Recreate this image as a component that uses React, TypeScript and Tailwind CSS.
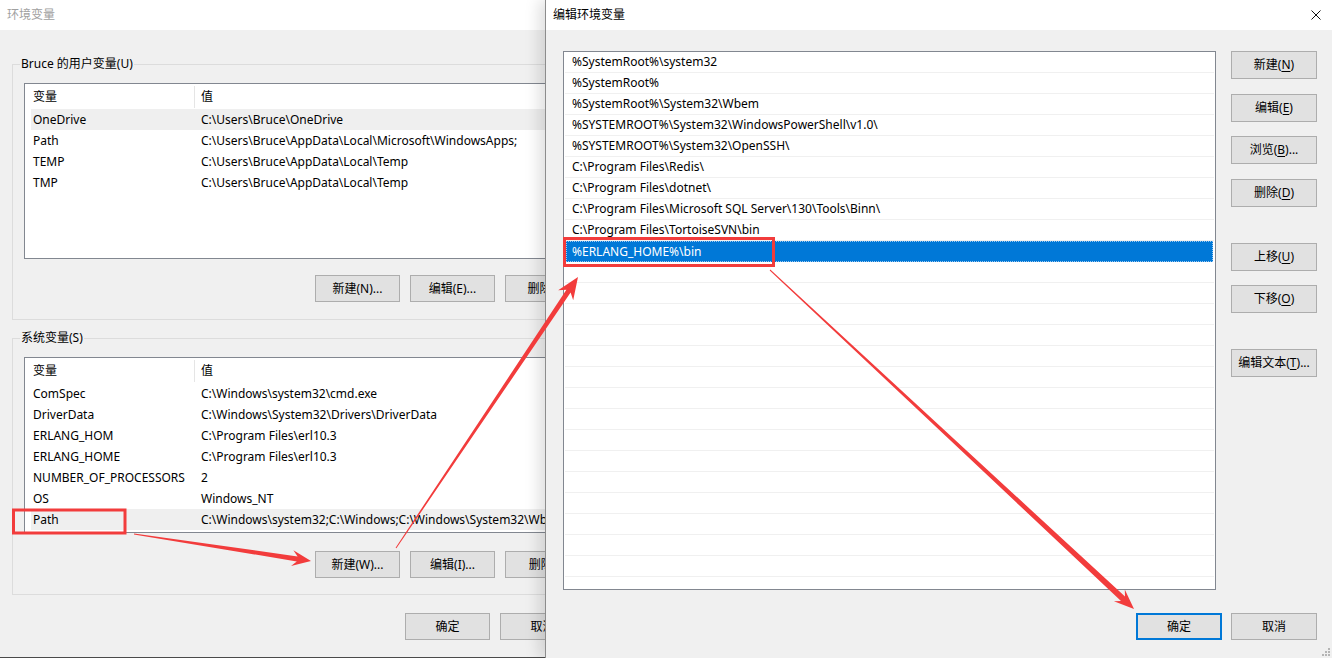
import React from 'react';

const FONT = "font-['Noto_Sans','Noto_Sans_CJK_SC',sans-serif]";

const userVars = [
  ['OneDrive', 'C:\\Users\\Bruce\\OneDrive'],
  ['Path', 'C:\\Users\\Bruce\\AppData\\Local\\Microsoft\\WindowsApps;'],
  ['TEMP', 'C:\\Users\\Bruce\\AppData\\Local\\Temp'],
  ['TMP', 'C:\\Users\\Bruce\\AppData\\Local\\Temp'],
];

const systemVars = [
  ['ComSpec', 'C:\\Windows\\system32\\cmd.exe'],
  ['DriverData', 'C:\\Windows\\System32\\Drivers\\DriverData'],
  ['ERLANG_HOM', 'C:\\Program Files\\erl10.3'],
  ['ERLANG_HOME', 'C:\\Program Files\\erl10.3'],
  ['NUMBER_OF_PROCESSORS', '2'],
  ['OS', 'Windows_NT'],
  ['Path', 'C:\\Windows\\system32;C:\\Windows;C:\\Windows\\System32\\Wbem;C:\\Windows\\System32\\WindowsPowerShell\\v1.0\\'],
];

const pathEntries = [
  '%SystemRoot%\\system32',
  '%SystemRoot%',
  '%SystemRoot%\\System32\\Wbem',
  '%SYSTEMROOT%\\System32\\WindowsPowerShell\\v1.0\\',
  '%SYSTEMROOT%\\System32\\OpenSSH\\',
  'C:\\Program Files\\Redis\\',
  'C:\\Program Files\\dotnet\\',
  'C:\\Program Files\\Microsoft SQL Server\\130\\Tools\\Binn\\',
  'C:\\Program Files\\TortoiseSVN\\bin',
  '%ERLANG_HOME%\\bin',
];

function WinButton({ children, className = '' }: { children: React.ReactNode; className?: string }) {
  return (
    <button className={`w-[85px] h-[27px] shrink-0 bg-[#e1e1e1] border border-[#adadad] text-[12px] text-black flex items-center justify-center whitespace-nowrap ${className}`}>
      {children}
    </button>
  );
}

function VarList({ rows, highlight }: { rows: string[][]; highlight: number }) {
  return (
    <div className="h-[176px] border border-[#828790] bg-white overflow-hidden">
      <div className="flex h-[25px] items-center">
        <div className="w-[170px] shrink-0 h-[22px] pl-[8px] flex items-center border-r border-[#e5e5e5]">变量</div>
        <div className="pl-[6px]">值</div>
      </div>
      {rows.map(([name, value], i) => (
        <div key={name + i} className={`ml-[6px] h-[21px] flex items-center whitespace-nowrap ${i === highlight ? 'bg-[#efefef]' : ''}`}>
          <div className="w-[164px] shrink-0 pl-[2px] overflow-hidden">{name}</div>
          <div className="pl-[6px]">{value}</div>
        </div>
      ))}
    </div>
  );
}

function EnvWindow() {
  return (
    <div className="w-[545px] h-[658px] shrink-0 overflow-hidden border-b border-[#4a4a4a]">
      <div className="w-[614px] h-full flex flex-col bg-[#f0f0f0]">
        <div className="h-[30px] bg-white pl-[7px] flex items-center text-[12px] text-[#a0a0a0]">环境变量</div>

        <fieldset className="min-w-0 mx-[12px] mt-[26px] border border-[#dcdcdc] px-[11px] pt-[11px] pb-[17px]">
          <legend className="-ml-[4px] px-[1px] leading-[16px]">Bruce 的用户变量(U)</legend>
          <VarList rows={userVars} highlight={0} />
          <div className="flex justify-end gap-[10px] mt-[16px]">
            <WinButton>新建(N)...</WinButton>
            <WinButton>编辑(E)...</WinButton>
            <WinButton>删除(D)</WinButton>
          </div>
        </fieldset>

        <fieldset className="min-w-0 mx-[12px] mt-[10px] border border-[#dcdcdc] px-[11px] pt-[11px] pb-[16px]">
          <legend className="-ml-[4px] px-[1px] leading-[16px]">系统变量(S)</legend>
          <VarList rows={systemVars} highlight={6} />
          <div className="flex justify-end gap-[10px] mt-[18px]">
            <WinButton>新建(W)...</WinButton>
            <WinButton>编辑(I)...</WinButton>
            <WinButton>删除(L)</WinButton>
          </div>
        </fieldset>

        <div className="flex justify-end gap-[10px] mt-[18px] pr-[29px]">
          <WinButton>确定</WinButton>
          <WinButton>取消</WinButton>
        </div>
      </div>
    </div>
  );
}

function SideButton({ label, mn, tail = '', className = '' }: { label: string; mn: string; tail?: string; className?: string }) {
  return (
    <button className={`w-[86px] h-[28px] shrink-0 bg-[#e1e1e1] border border-[#adadad] text-[12px] text-black flex items-center justify-center ${className}`}>
      {label}(<span className="underline underline-offset-2">{mn}</span>){tail}
    </button>
  );
}

function EditDialog() {
  const empties = Array.from({ length: 17 });
  return (
    <div className="flex-1 h-[658px] flex flex-col bg-[#f0f0f0] border-l border-[#8c8c8c] relative z-10 shadow-[-6px_0_14px_rgba(0,0,0,0.13)]">
      <div className="h-[30px] bg-white flex items-center justify-between pl-[7px] pr-[11px]">
        <span className="text-[12px] text-black">编辑环境变量</span>
        <svg width="10" height="10" viewBox="0 0 10 10" className="block">
          <path d="M0.5 0.5 L9.5 9.5 M9.5 0.5 L0.5 9.5" stroke="#111" strokeWidth="1" />
        </svg>
      </div>

      <div className="flex-1 flex flex-col pl-[17px] pr-[15px] pt-[21px]">
        <div className="flex gap-[15px]">
          <div className="w-[653px] h-[539px] border border-[#828790] bg-white overflow-hidden">
            {pathEntries.map((p, i) =>
              i === pathEntries.length - 1 ? (
                <div key={p} className="mx-[2px] h-[21px] flex items-center pl-[5px] bg-[#0078d7] text-white border border-dotted border-[#9cc8f0]">
                  {p}
                </div>
              ) : (
                <div key={p} className="mx-[1px] h-[21px] flex items-center pl-[7px] border-b border-[#f0f0f0] whitespace-nowrap">
                  {p}
                </div>
              )
            )}
            {empties.map((_, i) => (
              <div key={i} className="mx-[1px] h-[21px] border-b border-[#f0f0f0]" />
            ))}
          </div>

          <div className="w-[86px] flex flex-col">
            <SideButton label="新建" mn="N" />
            <SideButton label="编辑" mn="E" className="mt-[15px]" />
            <SideButton label="浏览" mn="B" tail="..." className="mt-[14px]" />
            <SideButton label="删除" mn="D" className="mt-[15px]" />
            <SideButton label="上移" mn="U" className="mt-[36px]" />
            <SideButton label="下移" mn="O" className="mt-[14px]" />
            <SideButton label="编辑文本" mn="T" tail="..." className="mt-[36px]" />
          </div>
        </div>

        <div className="flex justify-end gap-[9px] mt-[23px]">
          <button className="w-[86px] h-[27px] bg-[#e1e1e1] border-2 border-[#0078d7] text-[12px] text-black flex items-center justify-center">确定</button>
          <button className="w-[86px] h-[27px] bg-[#e1e1e1] border border-[#adadad] text-[12px] text-black flex items-center justify-center">取消</button>
        </div>
      </div>

      {/* size grip */}
      <svg width="10" height="10" viewBox="0 0 10 10" className="absolute right-[2px] bottom-[2px]">
        <rect x="8" y="2" width="2" height="2" fill="#b5b5b5" />
        <rect x="5" y="5" width="2" height="2" fill="#b5b5b5" />
        <rect x="8" y="5" width="2" height="2" fill="#b5b5b5" />
        <rect x="2" y="8" width="2" height="2" fill="#b5b5b5" />
        <rect x="5" y="8" width="2" height="2" fill="#b5b5b5" />
        <rect x="8" y="8" width="2" height="2" fill="#b5b5b5" />
      </svg>
    </div>
  );
}

function Annotations() {
  return (
    <svg className="absolute inset-0 pointer-events-none z-20" width="1332" height="658" viewBox="0 0 1332 658">
      <rect x="13.5" y="510" width="111.5" height="23" fill="none" stroke="#f23c3c" strokeWidth="3" />
      <rect x="564.5" y="238.5" width="209" height="27" fill="none" stroke="#f23c3c" strokeWidth="3" />
      <polygon
        fill="#f23c3c"
        points="134.1,533.5 297.6,556.4 293.4,550.2 311,561 291,566 296.8,561.4 133.9,534.5"
      />
      <polygon
        fill="#f23c3c"
        points="396.4,548.3 570.6,292.5 573.2,300.3 578,277 558.2,290.3 566.4,289.7 395.6,547.7"
      />
      <polygon
        fill="#f23c3c"
        points="769.7,270.4 1121,601 1113.9,601.2 1134,609 1124.8,589.5 1125,596.6 770.3,269.6"
      />
    </svg>
  );
}

export default function App() {
  return (
    <div className={`relative w-[1332px] h-[658px] flex overflow-hidden bg-[#f0f0f0] text-[12px] text-black ${FONT}`}>
      <EnvWindow />
      <EditDialog />
      <Annotations />
    </div>
  );
}
